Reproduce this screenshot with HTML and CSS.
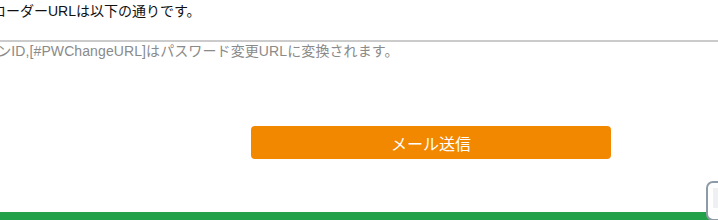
FILE: index.html
```html
<!DOCTYPE html>
<html>
  <head>
    <title>メール送信</title>
    <link rel="stylesheet" href="styles.css">
  </head>
  <body>
    <div class="page">
      <div class="mail-form">
        <p class="lead">アップローダーURLは以下の通りです。</p>

        <div class="mail-body">
          <p class="placeholder">[#LoginID]はログインID,[#PWChangeURL]はパスワード変更URLに変換されます。</p>
        </div>

        <div class="actions">
          <button class="send-button">メール送信</button>
        </div>
      </div>

      <div class="footer"></div>
    </div>

    <!-- page top button -->
    <div class="page-top"><span class="page-top-inner"></span></div>
  </body>
</html>
```

FILE: styles.css
```css
body {
  margin: 0;
  background-color: white;
  font-family: "Liberation Sans", "Noto Sans CJK JP", sans-serif;
  color: #111;
  overflow: hidden;
}

.page {
  width: 718px;
  height: 220px;
  overflow: hidden;
  display: flex;
  flex-direction: column;
}

.mail-form {
  flex: 1;
}

.lead {
  margin: 0 0 0 -50px;
  padding-top: 1px;
  font-size: 14px;
  line-height: 20px;
  white-space: nowrap;
}

.mail-body {
  margin-top: 19px;
  border-top: 2px solid #cbcbcb;
  height: 60px;
  padding: 0;
}

.placeholder {
  margin: 0 0 0 -124px;
  font-size: 14px;
  line-height: 18px;
  letter-spacing: 0.1px;
  color: #8a8a8a;
  white-space: nowrap;
}

.actions {
  padding-top: 24px;
  padding-left: 251px;
}

.send-button {
  width: 360px;
  height: 33px;
  border: none;
  border-radius: 4px;
  background-color: #f28800;
  color: white;
  font-family: "Liberation Sans", "Noto Sans CJK JP", sans-serif;
  font-size: 16px;
  cursor: pointer;
}

.footer {
  height: 8px;
  background-color: #22a04a;
}

.page-top {
  position: absolute;
  left: 706px;
  top: 181px;
  width: 40px;
  height: 40px;
  box-sizing: border-box;
  border: 2px solid #8e9ba7;
  border-radius: 7px;
  background-color: white;
}

.page-top-inner {
  position: absolute;
  left: 5px;
  top: 5px;
  width: 20px;
  height: 20px;
  background-color: #eef0f2;
}
```
